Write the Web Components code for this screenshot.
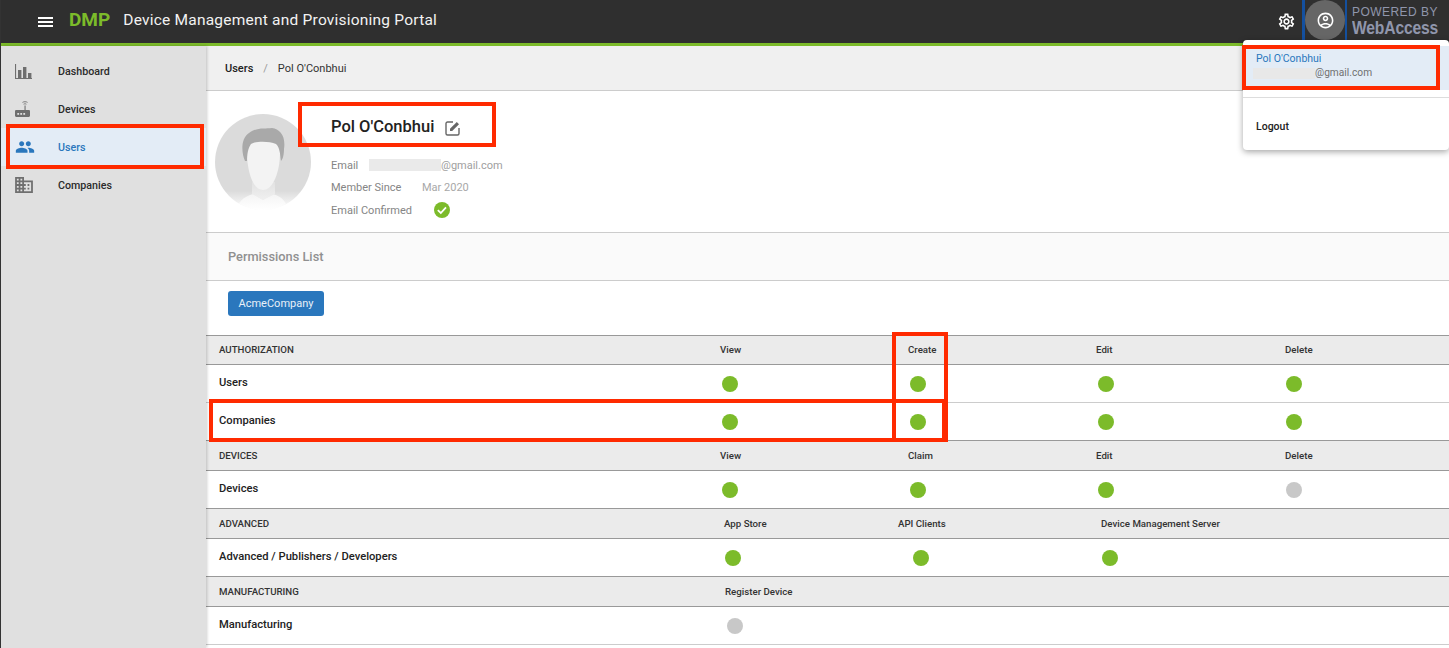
<!DOCTYPE html>
<html>
<head>
<meta charset="utf-8">
<title>DMP</title>
<style>
  html, body { margin: 0; height: 100%; overflow: hidden; background: #fff; }
  body { font-family: Roboto, "Liberation Sans", sans-serif; color: #222; }
</style>
</head>
<body>
<app-shell>
  <app-header slot="header"></app-header>
  <side-nav slot="side">
    <nav-item icon="chart">Dashboard</nav-item>
    <nav-item icon="router">Devices</nav-item>
    <nav-item icon="people" active>Users</nav-item>
    <nav-item icon="domain">Companies</nav-item>
  </side-nav>
  <bread-crumbs parent="Users" current="Pol O'Conbhui"></bread-crumbs>
  <user-profile name="Pol O'Conbhui" domain="@gmail.com" since="Mar 2020"></user-profile>
  <perm-list title="Permissions List" company="AcmeCompany"></perm-list>
  <perm-section name="AUTHORIZATION" cols="View,Create,Edit,Delete"
    style="--head-h:29px;--head-pb:2px;--head-cols:514px 188px 188px 189px 1fr;--dot-cols:516px 188px 188px 188px 1fr">
    <perm-row name="Users" values="1,1,1,1"></perm-row>
    <perm-row name="Companies" values="1,1,1,1" class="last"></perm-row>
  </perm-section>
  <perm-section name="DEVICES" cols="View,Claim,Edit,Delete"
    style="--head-cols:514px 188px 188px 189px 1fr;--dot-cols:516px 188px 188px 188px 1fr">
    <perm-row name="Devices" values="1,1,1,0" class="last"></perm-row>
  </perm-section>
  <perm-section name="ADVANCED" cols="App Store,API Clients,Device Management Server"
    style="--head-cols:518px 174px 203px 1fr;--dot-cols:519px 188px 189px 1fr">
    <perm-row name="Advanced / Publishers / Developers" values="1,1,1" class="last"></perm-row>
  </perm-section>
  <perm-section name="MANUFACTURING" cols="Register Device"
    style="--head-cols:519px 1fr;--dot-cols:521px 1fr">
    <perm-row name="Manufacturing" values="0"></perm-row>
  </perm-section>
  <user-menu slot="over" name="Pol O'Conbhui" domain="@gmail.com"></user-menu>
  <mark-box slot="over" style="left:6px;top:124px;width:198px;height:45px"></mark-box>
  <mark-box slot="over" style="left:298px;top:102px;width:198px;height:45px"></mark-box>
  <mark-box slot="over" style="left:209px;top:399px;width:737px;height:43px"></mark-box>
  <mark-box slot="over" style="left:892px;top:332px;width:56px;height:110px"></mark-box>
  <mark-box slot="over" style="left:1242px;top:45px;width:198px;height:45px"></mark-box>
</app-shell>

<script>
const ICONS = {
  chart: `<svg viewBox="0 0 17 15" width="17" height="15" fill="#6f6f6f"><path d="M0 0h1.100v13.900H17V15H0z"/><rect x="3" y="6" width="3.400" height="8"/><rect x="8" y="3" width="3.400" height="11"/><rect x="13" y="9" width="3.400" height="5"/></svg>`,
  router: `<svg viewBox="0 0 15 16" width="15" height="16"><path d="M7.500 1.400C8.700.5 11.300.5 12.500 1.400M8.600 3.200c.7-.5 2.100-.5 2.800 0" fill="none" stroke="#6f6f6f" stroke-width=".9"/><path fill="#6f6f6f" d="M9.500 4.600h1.100V9H9.500zM1.200 9h12.600c.6 0 1.200.6 1.200 1.200v4.600c0 .6-.6 1.200-1.200 1.200H1.200C.6 16 0 15.400 0 14.800v-4.600C0 9.600.6 9 1.200 9z"/><g fill="#e0e0e0"><rect x="2.300" y="12" width="1.800" height="1.800"/><rect x="5.300" y="12" width="1.800" height="1.800"/><rect x="8.300" y="12" width="1.800" height="1.800"/></g></svg>`,
  people: `<svg viewBox="0 0 24 24" width="20" height="20" fill="#2a77bd"><path d="M16 11c1.660 0 2.990-1.340 2.990-3S17.660 5 16 5c-1.660 0-3 1.340-3 3s1.340 3 3 3zm-8 0c1.660 0 2.990-1.340 2.990-3S9.660 5 8 5C6.340 5 5 6.340 5 8s1.340 3 3 3zm0 2c-2.330 0-7 1.170-7 3.500V19h14v-2.500c0-2.330-4.670-3.500-7-3.500zm8 0c-.29 0-.62.02-.97.05 1.160.84 1.970 1.970 1.970 3.450V19h6v-2.500c0-2.330-4.670-3.500-7-3.500z"/></svg>`,
  domain: `<svg viewBox="2 3 20 18" width="18" height="16" fill="#6f6f6f"><path d="M12 7V3H2v18h20V7H12zM6 19H4v-2h2v2zm0-4H4v-2h2v2zm0-4H4V9h2v2zm0-4H4V5h2v2zm4 12H8v-2h2v2zm0-4H8v-2h2v2zm0-4H8V9h2v2zm0-4H8V5h2v2zm10 12h-8v-2h2v-2h-2v-2h2v-2h-2V9h8v10zm-2-8h-2v2h2v-2zm0 4h-2v2h2v-2z"/></svg>`
};

function define(tag, css, html) {
  class C extends HTMLElement {
    constructor() {
      super();
      this.shadow = this.attachShadow({mode: "open"});
    }
    connectedCallback() {
      const a = n => this.getAttribute(n) || "";
      this.shadow.innerHTML = `<style>${css}</style>` + html(a, this);
    }
  }
  customElements.define(tag, C);
}

define("app-shell", `
  :host { display: block; height: 648px; position: relative; overflow: hidden; border-left: 1px solid #333; box-sizing: border-box; }
  .wrap { display: grid; grid-template-columns: 205px 1fr; grid-template-rows: 46px 1fr; height: 648px; }
  .top { grid-column: 1 / 3; }
  .main { min-width: 0; overflow: hidden; }
  .side { position: relative; z-index: 1; }
  .over { position: absolute; left: -1px; top: 0; width: 1449px; height: 648px; pointer-events: none; z-index: 5; }
`, () => `
  <div class="wrap">
    <div class="top"><slot name="header"></slot></div>
    <div class="side"><slot name="side"></slot></div>
    <div class="main"><slot></slot></div>
  </div>
  <div class="over"><slot name="over"></slot></div>
`);

define("app-header", `
  :host { display: flex; align-items: center; height: 46px; box-sizing: border-box; background: #2f2f2f; border-bottom: 3px solid #7cbb2a; color: #fff; padding-left: 37px; }
  .burger { display: block; width: 15px; height: 10px; border-top: 2px solid #fff; border-bottom: 2px solid #fff; position: relative; box-sizing: border-box; }
  .burger::after { content: ""; position: absolute; left: 0; right: 0; top: 2px; height: 2px; background: #fff; }
  .dmp { color: #7cbb2a; font-weight: 700; font-size: 19px; margin: 0 0 5px 16px; }
  .title { font-size: 15.500px; margin: 0 0 3px 13px; letter-spacing: .22px; color: #f2f2f2; }
  .right { margin-left: auto; display: flex; align-items: center; height: 43px; }
  .gear { display: flex; margin-right: 6px; }
  .user { width: 45px; height: 40px; align-self: flex-start; box-sizing: border-box; border-left: 3px solid #14509f; border-right: 2px solid #14509f; display: flex; justify-content: center; align-items: center; }
  .circle { width: 40px; height: 40px; border-radius: 50%; background: #666; display: flex; align-items: center; justify-content: center; flex: none; }
  .brand { width: 102px; padding: 0 0 0 5px; box-sizing: border-box; color: #9096ac; line-height: 1; font-family: "Liberation Sans", sans-serif; }
  .brand .p { font-size: 12px; letter-spacing: .45px; }
  .brand .w { font-size: 18px; font-weight: 700; letter-spacing: -.2px; transform: scaleX(.87); transform-origin: left; white-space: nowrap; margin-top: 1px; }
`, () => `
  <span class="burger"></span>
  <span class="dmp">DMP</span>
  <span class="title">Device Management and Provisioning Portal</span>
  <div class="right">
    <span class="gear"><svg viewBox="0 0 24 24" width="19" height="19" fill="#fff"><path d="M19.430 12.980c.04-.32.07-.64.07-.98 0-.34-.03-.66-.07-.98l2.110-1.650c.19-.15.24-.42.12-.64l-2-3.460c-.09-.16-.26-.25-.44-.25-.06 0-.12.01-.17.03l-2.490 1c-.52-.4-1.080-.73-1.690-.98l-.38-2.650C14.460 2.180 14.250 2 14 2h-4c-.25 0-.46.18-.49.42l-.38 2.650c-.61.25-1.170.59-1.690.98l-2.490-1c-.06-.02-.12-.03-.18-.03-.17 0-.34.09-.43.25l-2 3.460c-.13.22-.07.49.12.64l2.110 1.650c-.04.32-.07.65-.07.98 0 .33.03.66.07.98l-2.110 1.650c-.19.15-.24.42-.12.64l2 3.460c.09.16.26.25.44.25.06 0 .12-.01.17-.03l2.490-1c.52.4 1.080.73 1.690.98l.38 2.650c.03.24.24.42.49.42h4c.25 0 .46-.18.49-.42l.38-2.650c.61-.25 1.170-.59 1.690-.98l2.490 1c.06.02.12.03.18.03.17 0 .34-.09.43-.25l2-3.460c.12-.22.07-.49-.12-.64l-2.110-1.650zm-1.980-1.710c.04.31.05.52.05.73 0 .21-.02.43-.05.73l-.14 1.130.89.7 1.080.84-.7 1.210-1.270-.51-1.040-.42-.9.68c-.43.32-.84.56-1.250.73l-1.060.43-.16 1.130-.2 1.350h-1.400l-.19-1.350-.16-1.130-1.060-.43c-.43-.18-.83-.41-1.230-.71l-.91-.7-1.060.43-1.270.51-.7-1.210 1.080-.84.89-.7-.14-1.130c-.03-.31-.05-.54-.05-.74s.02-.43.05-.73l.14-1.130-.89-.7-1.080-.84.7-1.210 1.270.51 1.040.42.9-.68c.43-.32.84-.56 1.250-.73l1.060-.43.16-1.130.2-1.350h1.390l.19 1.350.16 1.130 1.060.43c.43.18.83.41 1.230.71l.91.7 1.060-.43 1.270-.51.7 1.210-1.070.85-.89.7.14 1.130zM12 8c-2.210 0-4 1.790-4 4s1.790 4 4 4 4-1.790 4-4-1.790-4-4-4zm0 6c-1.100 0-2-.9-2-2s.9-2 2-2 2 .9 2 2-.9 2-2 2z"/></svg></span>
    <div class="user"><span class="circle"><svg viewBox="0 0 24 24" width="19" height="19" fill="#fff"><path d="M12 2C6.480 2 2 6.480 2 12s4.480 10 10 10 10-4.480 10-10S17.520 2 12 2zM7.350 18.500C8.660 17.560 10.260 17 12 17s3.340.56 4.650 1.500c-1.310.94-2.910 1.500-4.650 1.500s-3.340-.56-4.650-1.500zm10.790-1.380C16.450 15.800 14.320 15 12 15s-4.450.8-6.140 2.120C4.700 15.730 4 13.950 4 12c0-4.420 3.580-8 8-8s8 3.580 8 8c0 1.950-.7 3.730-1.860 5.120zM12 6c-1.930 0-3.500 1.570-3.500 3.500S10.070 13 12 13s3.500-1.570 3.500-3.500S13.930 6 12 6zm0 5c-.83 0-1.500-.67-1.500-1.500S11.170 8 12 8s1.500.67 1.500 1.500S12.830 11 12 11z"/></svg></span></div>
    <div class="brand"><div class="p">POWERED BY</div><div class="w">WebAccess</div></div>
  </div>
`);

define("side-nav", `
  :host { display: block; height: 602px; background: #e0e0e0; padding-top: 6px; box-sizing: border-box; box-shadow: 1px 0 3px rgba(0,0,0,.2); }
`, () => `<slot></slot>`);

define("nav-item", `
  :host { display: flex; align-items: center; height: 38px; font-size: 10.700px; font-weight: 500; color: #2b2b2b; }
  :host([active]) { background: #e3ecf6; color: #2a77bd; }
  .ic { width: 57px; padding-left: 14px; box-sizing: border-box; display: flex; flex: none; }
`, (a) => `<span class="ic">${ICONS[a("icon")]}</span><slot></slot>`);

define("bread-crumbs", `
  :host { display: flex; align-items: center; height: 45px; box-sizing: border-box; background: #f0f0f0; border-bottom: 1px solid #ccc; padding-left: 19px; font-size: 11px; color: #333; }
  b { font-weight: 500; color: #222; }
  i { font-style: normal; color: #999; margin: 0 10px; }
`, (a) => `<b>${a("parent")}</b><i>/</i><span>${a("current")}</span>`);

define("user-profile", `
  :host { display: flex; height: 142px; box-sizing: border-box; border-bottom: 1px solid #ccc; padding: 23px 0 0 9px; }
  .info { margin-left: 20px; padding-top: 1px; }
  h1 { margin: 0; display: flex; align-items: center; font-size: 16.500px; font-weight: 500; color: #222; height: 24px; line-height: 24px; }
  h1 svg { margin-left: 11px; margin-top: 2px; }
  .rows { margin-top: 15px; font-size: 11px; color: #8a8a8a; }
  .row { display: flex; align-items: center; height: 22.500px; }
  .lab { width: 91px; color: #858585; }
  .blur { display: inline-block; width: 72px; height: 12px; background: #eaeaea; }
  .mail { color: #a0a0a0; }
  .val { color: #a8a8a8; }
  .em { width: 38px; }
`, (a) => `
  <svg width="96" height="96" viewBox="0 0 96 96">
    <defs>
      <linearGradient id="f" x1="0" y1="0" x2="0" y2="1"><stop offset=".8" stop-color="#dbdbdb"/><stop offset=".97" stop-color="#fafafa"/></linearGradient>
      <linearGradient id="n" x1="0" y1="0" x2="0" y2="1"><stop offset="0" stop-color="#e2e2e2"/><stop offset="1" stop-color="#f0f0f0"/></linearGradient>
      <linearGradient id="s" x1="0" y1="0" x2="0" y2="1"><stop offset="0" stop-color="#f4f4f4"/><stop offset="1" stop-color="#fff"/></linearGradient>
      <clipPath id="c"><circle cx="48" cy="48" r="48"/></clipPath>
    </defs>
    <g clip-path="url(#c)">
      <rect width="96" height="96" fill="url(#f)"/>
      <path d="M22 96C23 88 28 83 38 80L48 86 58 80C68 83 71 88 73 96z" fill="url(#s)"/>
      <path d="M37 68H60V80L48 86 37 80z" fill="url(#n)"/>
      <path d="M32 38C32 58 38 76 48 76 58 76 65 58 65 38 65 30 60 26 48 26 37 26 32 30 32 38z" fill="#f3f3f3"/>
      <path d="M30 47C26 38 26 24 34 19 42 13 50 15 57 14 65 15 71 22 69 35 69 40 68 45 66 47 65 40 65 34 61 30 54 27 41 27 36 30 33 34 32 41 32 47z" fill="#a9a9a9"/>
    </g>
  </svg>
  <div class="info">
    <h1>${a("name")}<svg width="16" height="16" viewBox="0 0 16 16" fill="none"><path d="M8 2H2.500C1.700 2 1 2.700 1 3.500v10c0 .8.7 1.500 1.500 1.500h10c.8 0 1.500-.7 1.500-1.500V8" stroke="#666" stroke-width="1.400"/><path d="M5 8.800 11.800 2 14 4.200 7.200 11H5z" fill="#666"/></svg></h1>
    <div class="rows">
      <div class="row"><span class="lab em">Email</span><span class="blur"></span><span class="mail">${a("domain")}</span></div>
      <div class="row"><span class="lab">Member Since</span><span class="val">${a("since")}</span></div>
      <div class="row"><span class="lab" style="width:103px">Email Confirmed</span><svg width="16" height="16" viewBox="0 0 16 16"><circle cx="8" cy="8" r="8" fill="#7cbb2a"/><path d="M3.800 8.200 6.800 11 12 5.400" fill="none" stroke="#fff" stroke-width="1.800"/></svg></div>
    </div>
  </div>
`);

define("perm-list", `
  :host { display: block; }
  .head { height: 48px; box-sizing: border-box; background: #fafafa; border-bottom: 1px solid #ccc; display: flex; align-items: center; padding-left: 22px; font-size: 12.800px; font-weight: 500; color: #909090; }
  .body { height: 55px; box-sizing: border-box; padding: 10px 0 0 22px; border-bottom: 1px solid #999; }
  button { all: unset; display: block; box-sizing: border-box; width: 96px; height: 25px; line-height: 21px; text-align: center; background: #2a77bd; border-radius: 3px; color: #e8f0f8; font-size: 11px; font-family: inherit; }
`, (a) => `<div class="head">${a("title")}</div><div class="body"><button>${a("company")}</button></div>`);

define("perm-section", `
  :host { display: block; }
  .head { display: grid; grid-template-columns: var(--head-cols); height: var(--head-h, 30px); padding-bottom: var(--head-pb, 0); box-sizing: border-box; align-items: center; background: #ebebeb; border-bottom: 1px solid #999; font-size: 9.700px; font-weight: 500; color: #333; }
  .head span:first-child { padding-left: 13px; }
`, (a) => `
  <div class="head"><span>${a("name")}</span>${a("cols").split(",").map(c => `<span>${c}</span>`).join("")}</div>
  <slot></slot>
`);

define("perm-row", `
  :host { display: grid; grid-template-columns: var(--dot-cols); height: 38px; box-sizing: border-box; align-items: center; border-bottom: 1px solid #ccc; font-size: 11.200px; font-weight: 500; color: #222; }
  :host(.last) { border-bottom-color: #999; }
  .name { padding-left: 13px; margin-top: -3px; }
  .dot { display: block; width: 16px; height: 16px; border-radius: 50%; background: #7cbb2a; }
  .dot.off { background: #c8c8c8; }
`, (a) => `<span class="name">${a("name")}</span>${a("values").split(",").map(v => `<span><span class="dot ${v === "1" ? "" : "off"}"></span></span>`).join("")}`);

define("user-menu", `
  :host { position: absolute; left: 1243px; top: 40px; width: 206px; height: 110px; background: #fff; border-radius: 4px; box-shadow: 0 2px 6px rgba(0,0,0,.35); font-size: 10.500px; display: block; padding-top: 6px; box-sizing: border-box; }
  .me { height: 44px; background: #e3ecf6; padding: 6px 0 0 13px; box-sizing: border-box; line-height: 14px; }
  .n { color: #2a77bd; }
  .m { color: #707070; display: flex; font-size: 10.200px; }
  .blur { width: 62px; height: 11px; margin: 2px 0 0 -3px; background: #e8e8e8; }
  hr { border: 0; border-top: 1px solid #ddd; margin: 7px 0 0; }
  .out { padding: 22px 0 0 13px; font-weight: 500; color: #222; }
`, (a) => `
  <div class="me"><div class="n">${a("name")}</div><div class="m"><span class="blur"></span>${a("domain")}</div></div>
  <hr>
  <div class="out">Logout</div>
`);

define("mark-box", `
  :host { position: absolute; display: block; box-sizing: border-box; border: 4px solid #ff2a00; }
`, () => ``);
</script>
</body>
</html>
